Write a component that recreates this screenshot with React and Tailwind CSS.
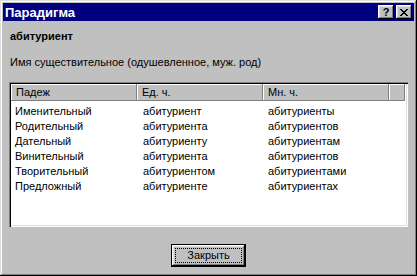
const rows = [
  ['Именительный', 'абитуриент', 'абитуриенты'],
  ['Родительный', 'абитуриента', 'абитуриентов'],
  ['Дательный', 'абитуриенту', 'абитуриентам'],
  ['Винительный', 'абитуриента', 'абитуриентов'],
  ['Творительный', 'абитуриентом', 'абитуриентами'],
  ['Предложный', 'абитуриенте', 'абитуриентах'],
];

const raised =
  'shadow-[inset_-1px_-1px_#000,inset_1px_1px_#fff,inset_-2px_-2px_#808080,inset_2px_2px_#dfdfdf]';

function CaptionButton({ children }) {
  return (
    <div className={`w-[16px] h-[14px] bg-[#c0c0c0] flex items-center justify-center ${raised}`}>
      {children}
    </div>
  );
}

function HeaderCell({ children }) {
  return (
    <div className="h-[17px] flex items-center pl-[5px] leading-[13px] bg-[#c0c0c0] shadow-[inset_-1px_-1px_#808080,inset_1px_1px_#fff]">
      {children}
    </div>
  );
}

export default function App() {
  return (
    <div className="w-[417px] h-[276px] bg-[#c0c0c0] p-[3px] flex flex-col font-['Liberation_Sans',Arial,sans-serif] text-[11px] text-black shadow-[inset_-1px_-1px_#000,inset_1px_1px_#dfdfdf,inset_-2px_-2px_#808080,inset_2px_2px_#fff]">
      {/* Title bar */}
      <div className="h-[18px] bg-[#000080] flex items-center pl-[2px] pr-[2px]">
        <span className="flex-1 text-white font-bold text-[13px] leading-[15px]">Парадигма</span>
        <div className="flex gap-[2px]">
          <CaptionButton>
            <span className="font-bold text-[11px] leading-[11px] mt-[1px]">?</span>
          </CaptionButton>
          <CaptionButton>
            <svg width="8" height="7" viewBox="0 0 8 7" shapeRendering="crispEdges">
              <path
                d="M0 0h2v1H0zM6 0h2v1H6zM1 1h2v1H1zM5 1h2v1H5zM2 2h4v1H2zM3 3h2v1H3zM2 4h4v1H2zM1 5h2v1H1zM5 5h2v1H5zM0 6h2v1H0zM6 6h2v1H6z"
                fill="#000"
              />
            </svg>
          </CaptionButton>
        </div>
      </div>

      <div className="flex-1 flex flex-col px-[6px]">
        <div className="mt-[9px] ml-[1px] font-bold leading-[13px]">абитуриент</div>
        <div className="mt-[13px] ml-[1px] leading-[13px]">Имя существительное (одушевленное, муж. род)</div>

        {/* List */}
        <div className="mt-[13px] h-[145px] bg-white p-[2px] shadow-[inset_1px_1px_#808080,inset_2px_2px_#000,inset_-1px_-1px_#fff,inset_-2px_-2px_#dfdfdf]">
          <div className="grid grid-cols-[126px_126px_126px_16px]">
            <HeaderCell>Падеж</HeaderCell>
            <HeaderCell>Ед. ч.</HeaderCell>
            <HeaderCell>Мн. ч.</HeaderCell>
            <HeaderCell />
          </div>
          <div className="pt-[3px]">
            {rows.map((r) => (
              <div key={r[0]} className="grid grid-cols-[126px_126px_126px] leading-[15px]">
                <div className="pl-[4px]">{r[0]}</div>
                <div className="pl-[6px]">{r[1]}</div>
                <div className="pl-[5px]">{r[2]}</div>
              </div>
            ))}
          </div>
        </div>

        {/* Close button */}
        <div className="mt-[17px] flex justify-center">
          <button className={`relative w-[75px] h-[23px] bg-[#c0c0c0] border border-black leading-[13px] ${raised}`}>
            <span className="absolute inset-[3px] border border-dotted border-black" />
            Закрыть
          </button>
        </div>
      </div>
    </div>
  );
}
